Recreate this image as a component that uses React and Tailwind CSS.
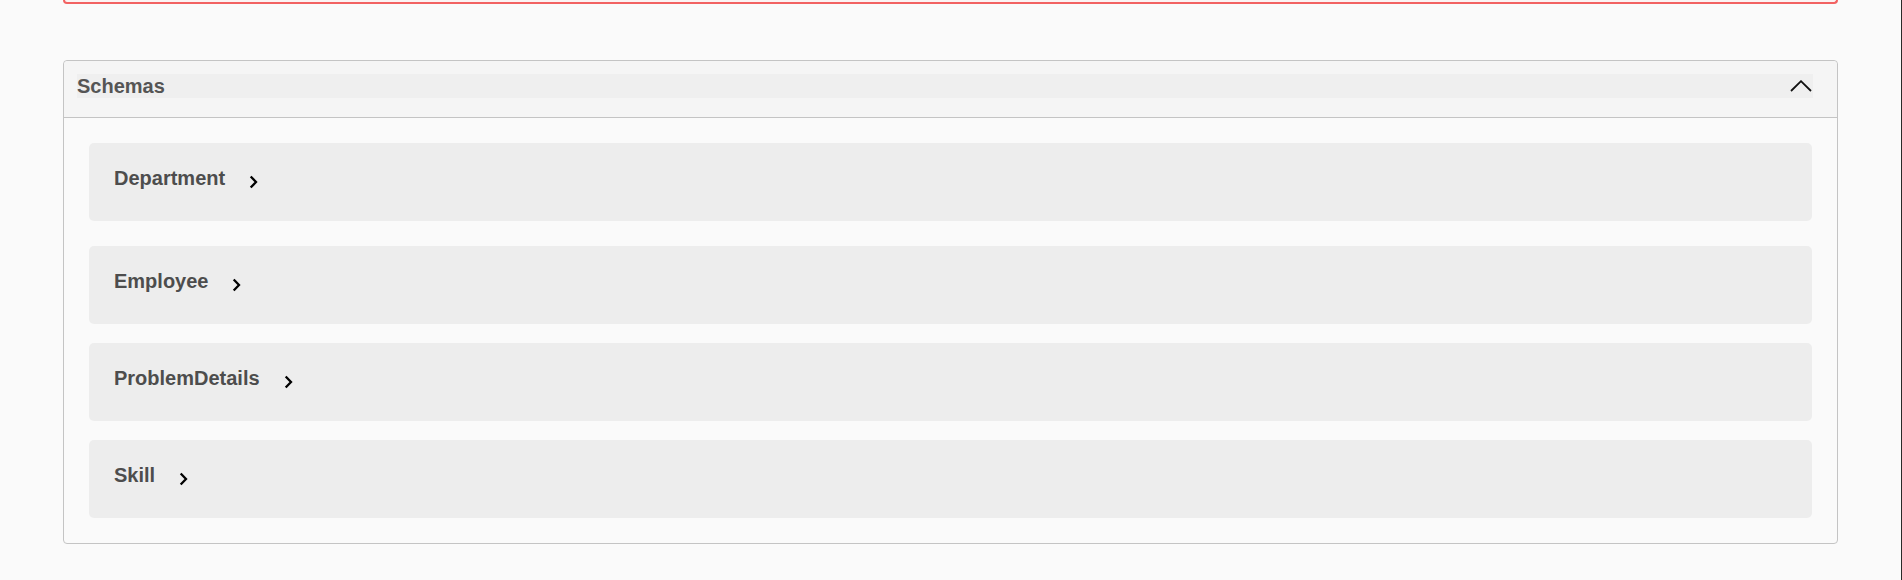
import React from 'react';

const schemas = ['Department', 'Employee', 'ProblemDetails', 'Skill'];

const ChevronRight = () => (
    <svg width="9" height="14" viewBox="0 0 9 14" className="mt-[8px] ml-[24px] shrink-0">
        <path d="M1.7 1.5 L7 7 L1.7 12.5" fill="none" stroke="#000" strokeWidth="2.3" />
    </svg>
);

const ChevronUp = () => (
    <svg width="22" height="12" viewBox="0 0 22 12" className="mr-[1px]">
        <path d="M1 11 L11 1.2 L21 11" fill="none" stroke="#111" strokeWidth="1.8" />
    </svg>
);

// gap after the first row is a bit bigger than the rest
const rowGap = ['', 'mt-[25px]', 'mt-[19px]', 'mt-[19px]'];

const SchemaRow = ({ name, index }) => (
    <div
        className={
            'flex items-start h-[78px] pl-[25px] pr-[26px] pt-[24px] rounded-[5px] bg-[#ededed] ' + rowGap[index]
        }
    >
        <span className="text-[20px] leading-[23px] font-bold text-[#4d4d4d]">{name}</span>
        <ChevronRight />
    </div>
);

export default function App() {
    return (
        <div
            className="flex min-h-[580px] w-full bg-[#fafafa]"
            style={{ fontFamily: '"Liberation Sans", Arial, sans-serif' }}
        >
            <div className="flex-1 px-[63px]">
                {/* tail of the error box above */}
                <div className="h-[4px] border-x-2 border-b-2 border-[#f26262] rounded-b-[5px] bg-[#fbf3f3]" />

                {/* Schemas section */}
                <section className="mt-[56px] border border-[#c4c4c4] rounded-[4px]">
                    <div className="pt-[13px] pb-[19px] pl-[13px] pr-[24px] bg-[#f5f5f5] border-b border-[#c4c4c4] rounded-t-[4px]">
                        <div className="flex items-center justify-between h-[24px] bg-[#efefef]">
                            <span className="text-[20px] leading-[24px] font-bold text-[#555555]">Schemas</span>
                            <ChevronUp />
                        </div>
                    </div>
                    <div className="px-[25px] py-[25px]">
                        {schemas.map((s, i) => (
                            <SchemaRow key={s} name={s} index={i} />
                        ))}
                    </div>
                </section>
            </div>
            <div className="w-px bg-[#2a2a2a]" />
        </div>
    );
}
